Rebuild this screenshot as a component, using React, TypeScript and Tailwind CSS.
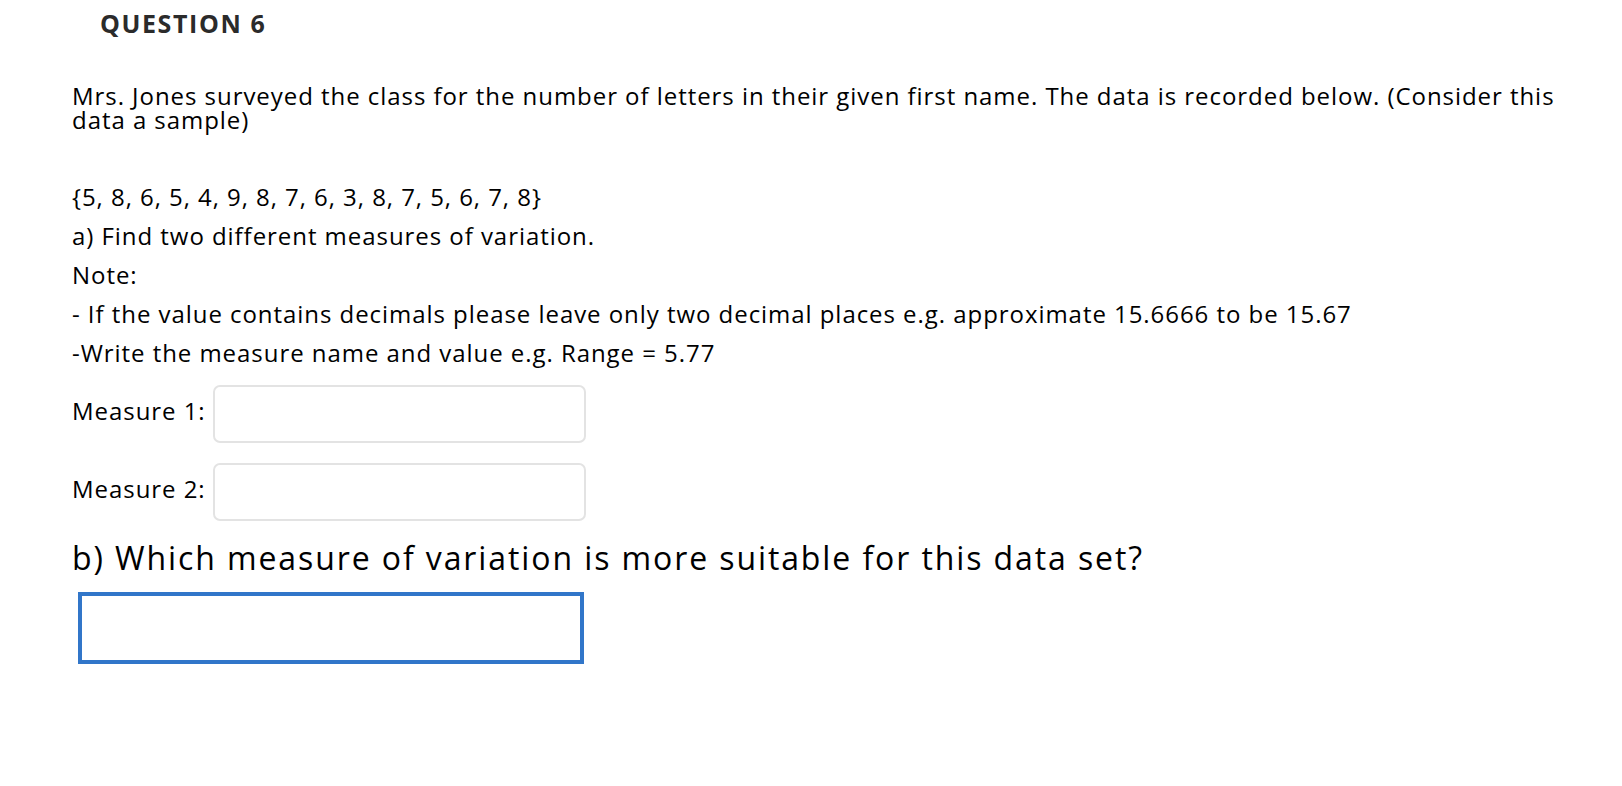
const font = { fontFamily: '"Open Sans", "Liberation Sans", sans-serif' };

const dataLines = [
  "{5, 8, 6, 5, 4, 9, 8, 7, 6, 3, 8, 7, 5, 6, 7, 8}",
  "a) Find two different measures of variation.",
  "Note:",
  "- If the value contains decimals please leave only two decimal places e.g. approximate 15.6666 to be 15.67",
  "-Write the measure name and value e.g. Range = 5.77",
];

export default function App() {
  return (
    <div className="min-h-[786px] w-full bg-white text-black" style={font}>
      <h1 className="pl-[100px] pt-[11px] text-[25px] font-bold leading-[25px] tracking-[1.6px] text-[#2b2b2b]">
        QUESTION 6
      </h1>

      <div className="pl-[72px] pr-[60px] tracking-[0.95px]">
        <p className="mt-[48px] text-[24px] leading-[24px]">
          Mrs. Jones surveyed the class for the number of letters in their given first name. The data is recorded below. (Consider this data a sample)
        </p>

        <div className="mt-[53px] flex flex-col gap-[15px]">
          {dataLines.map((line, i) => (
            <p key={i} className="text-[24px] leading-[24px]">
              {line}
            </p>
          ))}
        </div>

        <div className="mt-[20px] flex flex-col gap-[20px]">
          {["Measure 1:", "Measure 2:"].map((label) => (
            <div key={label} className="flex items-start">
              <span className="mt-[14px] w-[141px] text-[24px] leading-[24px]">{label}</span>
              <input
                type="text"
                className="h-[58px] w-[373px] rounded-[7px] border-2 border-[#e3e3e3] bg-white px-3 text-[24px] outline-none"
              />
            </div>
          ))}
        </div>

        <p className="mt-[21px] text-[32px] leading-[32px] tracking-[1.9px]">
          b) Which measure of variation is more suitable for this data set?
        </p>

        <input
          type="text"
          className="ml-[6px] mt-[18px] block h-[72px] w-[506px] border-4 border-[#3176c9] bg-white px-3 text-[24px] outline-none"
        />
      </div>
    </div>
  );
}
